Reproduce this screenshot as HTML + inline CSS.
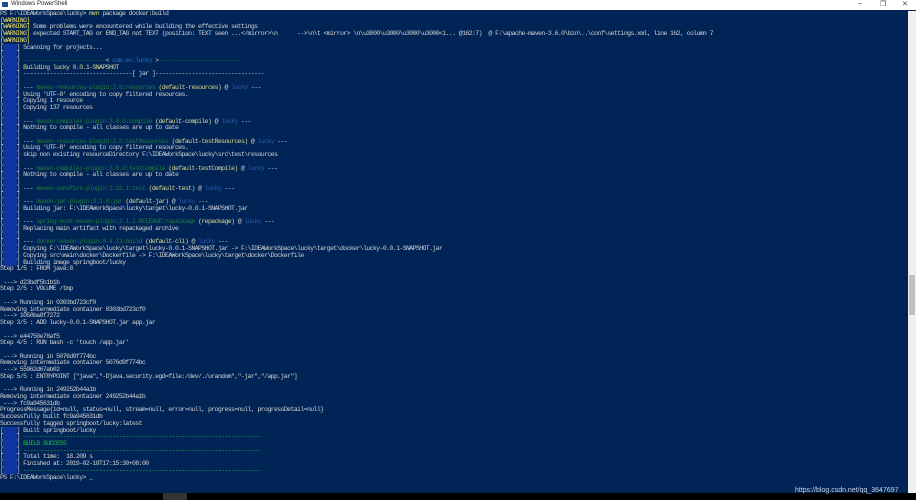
<!DOCTYPE html>
<html><head><meta charset="utf-8"><style>
html,body{margin:0;padding:0;width:916px;height:500px;overflow:hidden;background:#012456;}
#title{position:absolute;left:0;top:0;width:916px;height:10px;background:#fff;font:6px "Liberation Sans",sans-serif;color:#222;}
#title .ic{position:absolute;left:2px;top:2px;width:6px;height:5px;background:#1b4f9c;}
#title .t{position:absolute;left:11px;top:1px;}
#title .b{position:absolute;top:0px;font-size:7px;color:#444}
#con{position:absolute;left:0;top:11px;width:908px;height:482px;background:#012456;}
pre{margin:0;font:6.5px/6.72px "Liberation Mono",monospace;letter-spacing:-0.6px;color:#d0d0d0;white-space:pre;}
.y{color:#e8e060}.w{color:#f0e060}
.i{background:#1035a0;color:#1035a0}
.g{color:#1e7a3e}.d{color:#d8d890}.b{color:#2a5aa8}
.s{color:#22c040}.c{color:#2a6ab8}
#sb{position:absolute;left:908px;top:11px;width:8px;height:482px;background:#f0f0f0;}
#sb .th{position:absolute;left:1px;top:264px;width:6px;height:40px;background:#c0c0c0}
#tb{position:absolute;left:0;top:493px;width:916px;height:7px;background:#000;}
#tb .p{position:absolute;left:163px;top:0;width:24px;height:7px;background:#333}
#wm{position:absolute;left:795px;top:487px;font:7px "Liberation Sans",sans-serif;color:#c8d0e0}
</style></head><body>
<div id="title"><div class="ic"></div><div class="t">Windows PowerShell</div><span class="b" style="left:858px">–</span><span class="b" style="left:880px">❐</span><span class="b" style="left:902px">✕</span></div>
<div id="con"><pre>PS F:\IDEAWorkSpace\lucky&gt; <span class="y">mvn</span> package docker:build
<span class="w">[WARNING]</span>
<span class="w">[WARNING]</span> Some problems were encountered while building the effective settings
<span class="w">[WARNING]</span> expected START_TAG or END_TAG not TEXT (position: TEXT seen ...&lt;/mirror&gt;\n      --&gt;\n\t &lt;mirror&gt; \n\u3000\u3000\u3000\u3000&lt;i... @162:7)  @ F:\apache-maven-3.6.0\bin\..\conf\settings.xml, line 162, column 7
<span class="w">[WARNING]</span>
[<span class="i">INFO</span>] Scanning for projects...
[<span class="i">INFO</span>]
[<span class="i">INFO</span>] <span class="g">-------------------------</span>&lt; <span class="c">com.ex:lucky</span> &gt;<span class="g">-------------------------</span>
[<span class="i">INFO</span>] <span class="d">Building lucky 0.0.1-SNAPSHOT</span>
[<span class="i">INFO</span>] ---------------------------------[ jar ]---------------------------------
[<span class="i">INFO</span>]
[<span class="i">INFO</span>] --- <span class="g">maven-resources-plugin:2.6:resources</span> <span class="d">(default-resources)</span> @ <span class="b">lucky</span> ---
[<span class="i">INFO</span>] Using 'UTF-8' encoding to copy filtered resources.
[<span class="i">INFO</span>] Copying 1 resource
[<span class="i">INFO</span>] Copying 137 resources
[<span class="i">INFO</span>]
[<span class="i">INFO</span>] --- <span class="g">maven-compiler-plugin:3.8.0:compile</span> <span class="d">(default-compile)</span> @ <span class="b">lucky</span> ---
[<span class="i">INFO</span>] Nothing to compile - all classes are up to date
[<span class="i">INFO</span>]
[<span class="i">INFO</span>] --- <span class="g">maven-resources-plugin:2.6:testResources</span> <span class="d">(default-testResources)</span> @ <span class="b">lucky</span> ---
[<span class="i">INFO</span>] Using 'UTF-8' encoding to copy filtered resources.
[<span class="i">INFO</span>] skip non existing resourceDirectory F:\IDEAWorkSpace\lucky\src\test\resources
[<span class="i">INFO</span>]
[<span class="i">INFO</span>] --- <span class="g">maven-compiler-plugin:3.8.0:testCompile</span> <span class="d">(default-testCompile)</span> @ <span class="b">lucky</span> ---
[<span class="i">INFO</span>] Nothing to compile - all classes are up to date
[<span class="i">INFO</span>]
[<span class="i">INFO</span>] --- <span class="g">maven-surefire-plugin:2.22.1:test</span> <span class="d">(default-test)</span> @ <span class="b">lucky</span> ---
[<span class="i">INFO</span>]
[<span class="i">INFO</span>] --- <span class="g">maven-jar-plugin:3.1.0:jar</span> <span class="d">(default-jar)</span> @ <span class="b">lucky</span> ---
[<span class="i">INFO</span>] Building jar: F:\IDEAWorkSpace\lucky\target\lucky-0.0.1-SNAPSHOT.jar
[<span class="i">INFO</span>]
[<span class="i">INFO</span>] --- <span class="g">spring-boot-maven-plugin:2.1.1.RELEASE:repackage</span> <span class="d">(repackage)</span> @ <span class="b">lucky</span> ---
[<span class="i">INFO</span>] Replacing main artifact with repackaged archive
[<span class="i">INFO</span>]
[<span class="i">INFO</span>] --- <span class="g">docker-maven-plugin:0.4.11:build</span> <span class="d">(default-cli)</span> @ <span class="b">lucky</span> ---
[<span class="i">INFO</span>] Copying F:\IDEAWorkSpace\lucky\target\lucky-0.0.1-SNAPSHOT.jar -&gt; F:\IDEAWorkSpace\lucky\target\docker\lucky-0.0.1-SNAPSHOT.jar
[<span class="i">INFO</span>] Copying src\main\docker\Dockerfile -&gt; F:\IDEAWorkSpace\lucky\target\docker\Dockerfile
[<span class="i">INFO</span>] Building image springboot/lucky
Step 1/5 : FROM java:8

 ---&gt; d23bdf5b1b1b
Step 2/5 : VOLUME /tmp

 ---&gt; Running in 0303bd723cf0
Removing intermediate container 0303bd723cf0
 ---&gt; 1050ba8f7272
Step 3/5 : ADD lucky-0.0.1-SNAPSHOT.jar app.jar

 ---&gt; e44750e78af5
Step 4/5 : RUN bash -c 'touch /app.jar'

 ---&gt; Running in 5076d9f774bc
Removing intermediate container 5076d9f774bc
 ---&gt; 55962d67ab02
Step 5/5 : ENTRYPOINT ["java","-Djava.security.egd=file:/dev/./urandom","-jar","/app.jar"]

 ---&gt; Running in 249252b44a1b
Removing intermediate container 249252b44a1b
 ---&gt; fc9a945631db
ProgressMessage{id=null, status=null, stream=null, error=null, progress=null, progressDetail=null}
Successfully built fc9a945631db
Successfully tagged springboot/lucky:latest
[<span class="i">INFO</span>] Built springboot/lucky
[<span class="i">INFO</span>] <span class="s">------------------------------------------------------------------------</span>
[<span class="i">INFO</span>] <span class="s">BUILD SUCCESS</span>
[<span class="i">INFO</span>] <span class="s">------------------------------------------------------------------------</span>
[<span class="i">INFO</span>] Total time:  18.209 s
[<span class="i">INFO</span>] Finished at: 2019-02-18T17:15:30+08:00
[<span class="i">INFO</span>] <span class="s">------------------------------------------------------------------------</span>
PS F:\IDEAWorkSpace\lucky&gt; _</pre></div>
<div id="sb"><div class="th"></div></div>
<div id="tb"><div class="p"></div></div>
<div id="wm">https://blog.csdn.net/qq_3647697</div>
</body></html>
